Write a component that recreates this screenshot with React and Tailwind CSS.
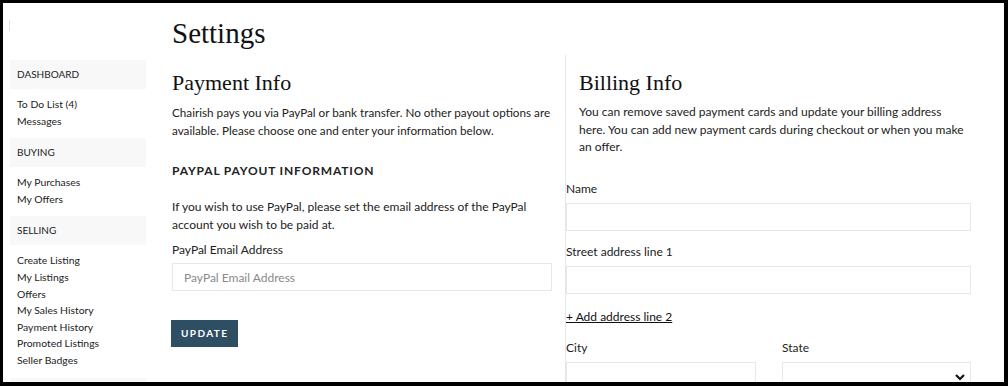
import React from 'react';

const sans = { fontFamily: 'Lato, "Noto Sans", sans-serif' };
const serif = { fontFamily: '"Liberation Serif", serif' };

const sections = [
  { title: 'DASHBOARD', links: ['To Do List (4)', 'Messages'] },
  { title: 'BUYING', links: ['My Purchases', 'My Offers'] },
  {
    title: 'SELLING',
    links: [
      'Create Listing',
      'My Listings',
      'Offers',
      'My Sales History',
      'Payment History',
      'Promoted Listings',
      'Seller Badges',
    ],
  },
];

function Sidebar() {
  return (
    <div className="w-[136px] shrink-0">
      <div className="mt-[17px] ml-[-1px] w-px h-[11px] bg-[#e2e2e2]" />
      <div className="mt-[29px]">
        {sections.map((s) => (
          <div key={s.title}>
            <div className="h-[29px] bg-[#f8f8f8] flex items-center px-[7px] text-[10px] text-[#222] uppercase">
              {s.title}
            </div>
            <ul className="pt-[7px] pb-[9px] px-[7px] text-[10.4px] text-[#222] leading-[16.6px]">
              {s.links.map((l) => (
                <li key={l}>
                  <a href="#" className="hover:underline">
                    {l}
                  </a>
                </li>
              ))}
            </ul>
          </div>
        ))}
        {/* next section header, cut off by the window */}
        <div className="h-[29px] bg-[#f8f8f8]" />
      </div>
    </div>
  );
}

function Field({ label, className = '', select = false }) {
  return (
    <div className={className}>
      <label className="block text-[12px] text-[#222] leading-[18px] mb-[5px]">{label}</label>
      <div className="relative h-[28px] border border-[#e8e8e8] bg-white">
        {select && (
          <svg
            className="absolute right-[5px] top-[10px] w-[10px] h-[8px]"
            viewBox="0 0 10 8"
            fill="none"
            stroke="#111"
            strokeWidth="2.2"
          >
            <path d="M1 2l4 4 4-4" />
          </svg>
        )}
      </div>
    </div>
  );
}

export default function App() {
  return (
    <div
      className="h-[386px] w-[1008px] overflow-hidden bg-white border-black border-t-[3px] border-l-[3px] border-r-[4px] border-b-[4px]"
      style={sans}
    >
      <div className="flex h-full pl-[7px]">
        <Sidebar />

        <div className="flex-1 pl-[26px]">
          <h1 className="h-[52px] pt-[15px] text-[29px] leading-[30px] text-[#111] font-normal" style={serif}>
            Settings
          </h1>

          <div className="flex">
            {/* Payment Info */}
            <div className="w-[393px] pr-[13px] pt-[15px]">
              <h2 className="text-[22px] leading-[26px] text-[#111]" style={serif}>
                Payment Info
              </h2>
              <p className="mt-[7px] text-[11.7px] leading-[18px] text-[#222] whitespace-nowrap">
                Chairish pays you via PayPal or bank transfer. No other payout options are
                <br />
                available. Please choose one and enter your information below.
              </p>
              <h3 className="mt-[23px] text-[12px] font-bold tracking-[0.07em] text-[#222] leading-[18px]">
                PAYPAL PAYOUT INFORMATION
              </h3>
              <p className="mt-[18px] text-[12px] leading-[17.5px] text-[#222] whitespace-nowrap">
                If you wish to use PayPal, please set the email address of the PayPal
                <br />
                account you wish to be paid at.
              </p>
              <label className="block mt-[8px] text-[12px] leading-[18px] text-[#222]">
                PayPal Email Address
              </label>
              <input
                type="text"
                placeholder="PayPal Email Address"
                className="mt-[4px] w-full h-[28px] border border-[#e8e8e8] px-[11px] text-[12px] text-[#222] placeholder:text-[#8a8a8a] outline-none"
              />
              <button className="mt-[29px] ml-[-1px] h-[27px] px-[10px] bg-[#2e4e64] text-white text-[10px] font-bold tracking-[0.14em]">
                UPDATE
              </button>
            </div>

            {/* Billing Info */}
            <div className="flex-1 border-l border-[#e6e6e6] h-[340px]">
              <div className="pl-[13px] pr-[30px] pt-[15px]">
                <h2 className="text-[22px] leading-[26px] text-[#111]" style={serif}>
                  Billing Info
                </h2>
                <p className="mt-[7px] text-[12px] leading-[17.5px] text-[#222] whitespace-nowrap">
                  You can remove saved payment cards and update your billing address
                  <br />
                  here. You can add new payment cards during checkout or when you make
                  <br />
                  an offer.
                </p>
              </div>
              <div className="pr-[33px] pt-[24px]">
                <Field label="Name" />
                <Field label="Street address line 1" className="mt-[12px]" />
                <a href="#" className="inline-block mt-[14px] text-[12px] leading-[18px] text-[#111] underline">
                  + Add address line 2
                </a>
                <div className="mt-[12px] flex gap-[26px]">
                  <Field label="City" className="w-[190px]" />
                  <Field label="State" className="flex-1" select />
                </div>
              </div>
            </div>
          </div>
        </div>
      </div>
    </div>
  );
}
